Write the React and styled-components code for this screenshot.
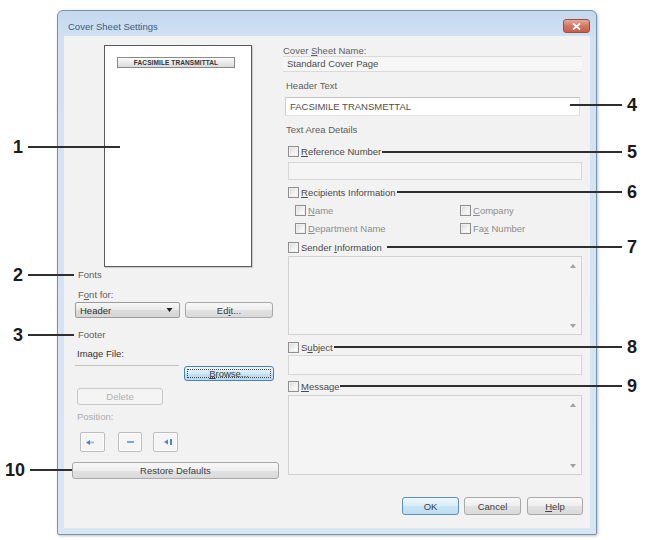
import React from 'react';
import styled, { createGlobalStyle, css } from 'styled-components';

const Global = createGlobalStyle`
  html, body { margin: 0; padding: 0; background: #fff; }
  body { font-family: "Liberation Sans", Arial, sans-serif; }
  * { box-sizing: border-box; }
`;

const Page = styled.div`
  position: relative;
  width: 648px;
  height: 540px;
  padding: 10px 0 0 57px;
  overflow: hidden;
  background: #fff;
`;

const Window = styled.div`
  width: 540px;
  height: 525px;
  display: flex;
  flex-direction: column;
  border: 1px solid #7891ad;
  border-radius: 6px 6px 2px 2px;
  background: linear-gradient(#c4d8ee, #d2e2f3 30px, #d8e6f4);
  padding: 0 6px 6px;
  box-shadow: 1px 1px 3px rgba(0, 0, 0, 0.25);
`;

const TitleBar = styled.div`
  height: 25px;
  flex: none;
  display: flex;
  align-items: flex-start;
  justify-content: space-between;
`;

const Title = styled.span`
  margin: 10px 0 0 4px;
  font-size: 9.5px;
  line-height: 11px;
  color: #3f5b7e;
`;

const CloseBtn = styled.div`
  margin-top: 8px;
  width: 27px;
  height: 14px;
  border: 1px solid #9a4f42;
  border-radius: 3px;
  background: linear-gradient(#e6a99a, #d37563 50%, #c85f4b);
  display: flex;
  align-items: center;
  justify-content: center;
`;

const Content = styled.div`
  flex: 1;
  background: #f2f2f2;
  display: flex;
  flex-direction: column;
  padding: 9px 7px 0 8px;
`;

const Main = styled.div`
  display: grid;
  grid-template-columns: 208px 300px;
  column-gap: 3px;
  align-items: start;
`;

const Column = styled.div`
  display: flex;
  flex-direction: column;
  align-items: flex-start;
`;

const Preview = styled.div`
  margin-left: 32px;
  width: 148px;
  height: 222px;
  border: 1px solid #5a5a5a;
  background: #fff;
  padding: 11px 0 0 12px;
  box-shadow: 1px 1px 1px rgba(0, 0, 0, 0.15);
`;

const HeaderBar = styled.div`
  width: 118px;
  height: 11px;
  border: 1px solid #8a8a8a;
  background: linear-gradient(#fbfbfb, #dadada);
  font-size: 6.5px;
  line-height: 9px;
  font-weight: bold;
  color: #333;
  text-align: center;
  letter-spacing: 0.1px;
`;

const Label = styled.div`
  font-size: 9.5px;
  line-height: ${(p) => p.$lh || 12}px;
  margin-top: ${(p) => p.$mt || 0}px;
  margin-left: ${(p) => p.$ml || 0}px;
  color: ${(p) => (p.$disabled ? '#ababab' : p.$dark ? '#333' : '#5e5e5e')};
  white-space: nowrap;
`;

const Row = styled.div`
  display: flex;
  align-items: center;
  margin-top: ${(p) => p.$mt || 0}px;
  margin-left: ${(p) => p.$ml || 0}px;
`;

const Button = styled.div`
  width: ${(p) => p.$w}px;
  height: ${(p) => p.$h || 17}px;
  margin-left: ${(p) => p.$ml || 0}px;
  margin-top: ${(p) => p.$mt || 0}px;
  flex: none;
  display: flex;
  align-items: center;
  justify-content: center;
  border: 1px solid #a9a9a9;
  border-radius: 3px;
  background: linear-gradient(#f8f8f8, #eeeeee 50%, #e2e2e2 51%, #dadada);
  font-size: 9.5px;
  color: #3e3e3e;
  position: relative;
  ${(p) =>
    p.$disabled &&
    css`
      border-color: #c9c9c9;
      background: #f4f4f4;
      color: #b0b0b0;
    `}
  ${(p) =>
    p.$primary &&
    css`
      border-color: #5a90bd;
      background: linear-gradient(#eef7fd, #d9edf9 50%, #c8e4f6 51%, #c0def1);
    `}
  ${(p) =>
    p.$focus &&
    css`
      border-color: #4a82b3;
      background: linear-gradient(#eaf5fc, #d4eaf8 50%, #c0e0f4 51%, #b8daef);
      &::after {
        content: '';
        position: absolute;
        inset: 2px;
        border: 1px dotted #444;
      }
    `}
`;

const Dropdown = styled.div`
  width: 105px;
  height: 16px;
  border: 1px solid #9b9b9b;
  border-radius: 2px;
  background: linear-gradient(#f7f7f7, #e9e9e9 50%, #dcdcdc 51%, #d6d6d6);
  display: flex;
  align-items: center;
  justify-content: space-between;
  padding: 0 6px 0 4px;
  font-size: 9.5px;
  color: #333;
`;

const FileField = styled.div`
  width: 104px;
  height: 16px;
  border-top: 1px solid #c2c2c2;
  background: #f2f2f2;
`;

const PosBtn = styled.div`
  width: ${(p) => p.$w}px;
  height: 20px;
  margin-left: ${(p) => p.$ml || 0}px;
  border: 1px solid #bdbdbd;
  border-radius: 2px;
  background: #f5f5f5;
  box-shadow: inset 0 0 0 1px #fbfbfb;
  display: flex;
  align-items: center;
  justify-content: ${(p) => p.$justify};
  padding: 0 5px;
`;

const Field = styled.div`
  margin-top: ${(p) => p.$mt || 0}px;
  margin-left: ${(p) => p.$ml || 0}px;
  width: ${(p) => p.$w}px;
  height: ${(p) => p.$h}px;
  font-size: 9.5px;
  line-height: ${(p) => p.$h - 2}px;
  padding-left: 4px;
  color: #4e4e4e;
  border: 1px solid #d6d6d6;
  background: ${(p) => (p.$white ? '#fff' : '#f5f5f5')};
  ${(p) =>
    p.$white &&
    css`
      border-color: #c5c5c5 #dcdcdc #e2e2e2 #cfcfcf;
    `}
  ${(p) =>
    p.$flat &&
    css`
      border-left: none;
      border-right: none;
      border-color: #dadada;
      background: #f6f6f6;
    `}
`;

const ScrollArea = styled.div`
  margin-top: ${(p) => p.$mt || 0}px;
  margin-left: 5px;
  width: 294px;
  height: ${(p) => p.$h}px;
  border: 1px solid #d2d2d2;
  background: #f4f4f4;
  display: flex;
  justify-content: flex-end;
`;

const ScrollCol = styled.div`
  width: 17px;
  display: flex;
  flex-direction: column;
  justify-content: space-between;
  align-items: center;
  padding: 7px 0 6px;
`;

const CheckRow = styled.label`
  display: flex;
  align-items: center;
  height: 13px;
  margin-top: ${(p) => p.$mt || 0}px;
  margin-left: ${(p) => p.$ml || 0}px;
  font-size: 9.5px;
  color: ${(p) => (p.$sub ? '#8d8d8d' : '#4a4a4a')};
  white-space: nowrap;
`;

const Box = styled.span`
  width: 11px;
  height: 11px;
  flex: none;
  margin-right: 2px;
  border: 1px solid #8f8f8f;
  background: linear-gradient(135deg, #d8d8d8, #f4f4f4 60%, #ffffff);
  box-shadow: inset 0 0 0 1px #eeeeee;
`;

const SubGrid = styled.div`
  display: grid;
  grid-template-columns: 165px auto;
  row-gap: 5px;
  margin-top: 5px;
  margin-left: 12px;
`;

const ButtonBar = styled.div`
  display: flex;
  justify-content: flex-end;
  margin-top: 18px;
`;

const U = styled.span`
  text-decoration: underline;
`;

const CalloutNum = styled.span`
  position: absolute;
  left: ${(p) => p.$x}px;
  top: ${(p) => p.$y - 10}px;
  font: bold 18px/20px "Liberation Sans", Arial, sans-serif;
  color: #1b1b1b;
`;

const CalloutLine = styled.div`
  position: absolute;
  left: ${(p) => p.$x1}px;
  width: ${(p) => p.$x2 - p.$x1}px;
  top: ${(p) => p.$y - 1}px;
  height: 2px;
  background: #2f2f2f;
`;

const callouts = [
  { n: '1', nx: 13, y: 147, x1: 28, x2: 120 },
  { n: '2', nx: 13, y: 275, x1: 28, x2: 74 },
  { n: '3', nx: 13, y: 335, x1: 28, x2: 74 },
  { n: '10', nx: 5, y: 470, x1: 30, x2: 72 },
  { n: '4', nx: 627, y: 105, x1: 570, x2: 622 },
  { n: '5', nx: 627, y: 152, x1: 382, x2: 622 },
  { n: '6', nx: 627, y: 192, x1: 397, x2: 622 },
  { n: '7', nx: 627, y: 247, x1: 387, x2: 622 },
  { n: '8', nx: 627, y: 347, x1: 334, x2: 622 },
  { n: '9', nx: 627, y: 386, x1: 340, x2: 622 },
];

const UpArrow = () => (
  <svg width="6" height="4" viewBox="0 0 6 4">
    <path d="M0 4 L3 0 L6 4 Z" fill="#a0a0a0" />
  </svg>
);
const DownArrow = ({ color = '#a0a0a0', w = 6, h = 4 }) => (
  <svg width={w} height={h} viewBox="0 0 6 4">
    <path d="M0 0 L6 0 L3 4 Z" fill={color} />
  </svg>
);

const Scroll = ({ h, mt }) => (
  <ScrollArea $h={h} $mt={mt}>
    <ScrollCol>
      <UpArrow />
      <DownArrow />
    </ScrollCol>
  </ScrollArea>
);

const Check = ({ children, mt, ml, sub }) => (
  <CheckRow $mt={mt} $ml={ml} $sub={sub}>
    <Box />
    {children}
  </CheckRow>
);

export default function App() {
  return (
    <>
      <Global />
      <Page>
        <Window>
          <TitleBar>
            <Title>Cover Sheet Settings</Title>
            <CloseBtn>
              <svg width="9" height="7" viewBox="0 0 9 7">
                <path d="M1 0.5 L8 6.5 M8 0.5 L1 6.5" stroke="#fff" strokeWidth="1.8" />
              </svg>
            </CloseBtn>
          </TitleBar>
          <Content>
            <Main>
              <Column>
                <Preview>
                  <HeaderBar>FACSIMILE TRANSMITTAL</HeaderBar>
                </Preview>
                <Label $mt={2} $ml={6}>Fonts</Label>
                <Label $mt={8} $ml={6}>
                  F<U>o</U>nt for:
                </Label>
                <Row $mt={1} $ml={3}>
                  <Dropdown>
                    <span>Header</span>
                    <DownArrow color="#222" w={7} h={4} />
                  </Dropdown>
                  <Button $w={88} $h={16} $ml={5}>
                    Ed<U>i</U>t...
                  </Button>
                </Row>
                <Label $mt={11} $ml={6}>Footer</Label>
                <Label $mt={7} $ml={5} $dark>Image File:</Label>
                <Row $mt={5} $ml={3}>
                  <FileField />
                  <Button $w={90} $h={15} $ml={5} $focus>
                    <U>B</U>rowse...
                  </Button>
                </Row>
                <Button $w={86} $mt={7} $ml={5} $disabled>
                  Delete
                </Button>
                <Label $mt={6} $ml={5} $disabled>Position:</Label>
                <Row $mt={9} $ml={8}>
                  <PosBtn $w={25} $justify="flex-start">
                    <svg width="8" height="5" viewBox="0 0 8 5">
                      <path d="M0 2.5 L4 0 L4 5 Z" fill="#4f86c8" />
                      <rect x="4" y="1.5" width="4" height="2" fill="#9dbfe6" />
                    </svg>
                  </PosBtn>
                  <PosBtn $w={24} $ml={13} $justify="center">
                    <svg width="7" height="4" viewBox="0 0 7 4">
                      <rect x="0" y="1" width="7" height="2" fill="#7aa5d8" />
                    </svg>
                  </PosBtn>
                  <PosBtn $w={25} $ml={11} $justify="flex-end">
                    <svg width="8" height="6" viewBox="0 0 8 6">
                      <path d="M0 3 L4 0.5 L4 5.5 Z" fill="#4f86c8" />
                      <rect x="6" y="0" width="2" height="6" fill="#4f86c8" />
                    </svg>
                  </PosBtn>
                </Row>
                <Button $w={207} $mt={10}>
                  Restore Defaults
                </Button>
              </Column>

              <Column>
                <Label $lh={11}>
                  Cover <U>S</U>heet Name:
                </Label>
                <Field $w={299} $h={16} $flat>
                  Standard Cover Page
                </Field>
                <Label $mt={8} $ml={3}>Header Text</Label>
                <Field $mt={5} $ml={2} $w={295} $h={19} $white>
                  FACSIMILE TRANSMETTAL
                </Field>
                <Label $mt={8} $ml={3}>Text Area Details</Label>
                <Check mt={9} ml={5}>
                  <span>
                    <U>R</U>eference Number
                  </span>
                </Check>
                <Field $mt={4} $ml={5} $w={294} $h={18} />
                <Check mt={6} ml={5}>
                  <span>
                    <U>R</U>ecipients Information
                  </span>
                </Check>
                <SubGrid>
                  <Check sub>
                    <span>
                      <U>N</U>ame
                    </span>
                  </Check>
                  <Check sub>
                    <span>
                      <U>C</U>ompany
                    </span>
                  </Check>
                  <Check sub>
                    <span>
                      <U>D</U>epartment Name
                    </span>
                  </Check>
                  <Check sub>
                    <span>
                      Fa<U>x</U> Number
                    </span>
                  </Check>
                </SubGrid>
                <Check mt={6} ml={5}>
                  <span>
                    Sender <U>I</U>nformation
                  </span>
                </Check>
                <Scroll h={79} mt={2} />
                <Check mt={6} ml={5}>
                  <span>
                    S<U>u</U>bject
                  </span>
                </Check>
                <Field $mt={1} $ml={5} $w={294} $h={20} />
                <Check mt={5} ml={5}>
                  <span>
                    <U>M</U>essage
                  </span>
                </Check>
                <Scroll h={80} mt={2} />
              </Column>
            </Main>
            <ButtonBar>
              <Button $w={57} $h={18} $primary>
                OK
              </Button>
              <Button $w={57} $h={18} $ml={5}>
                Cancel
              </Button>
              <Button $w={56} $h={18} $ml={6}>
                <U>H</U>elp
              </Button>
            </ButtonBar>
          </Content>
        </Window>
        {callouts.map((c) => (
          <React.Fragment key={c.n}>
            <CalloutLine $x1={c.x1} $x2={c.x2} $y={c.y} />
            <CalloutNum $x={c.nx} $y={c.y}>
              {c.n}
            </CalloutNum>
          </React.Fragment>
        ))}
      </Page>
    </>
  );
}
